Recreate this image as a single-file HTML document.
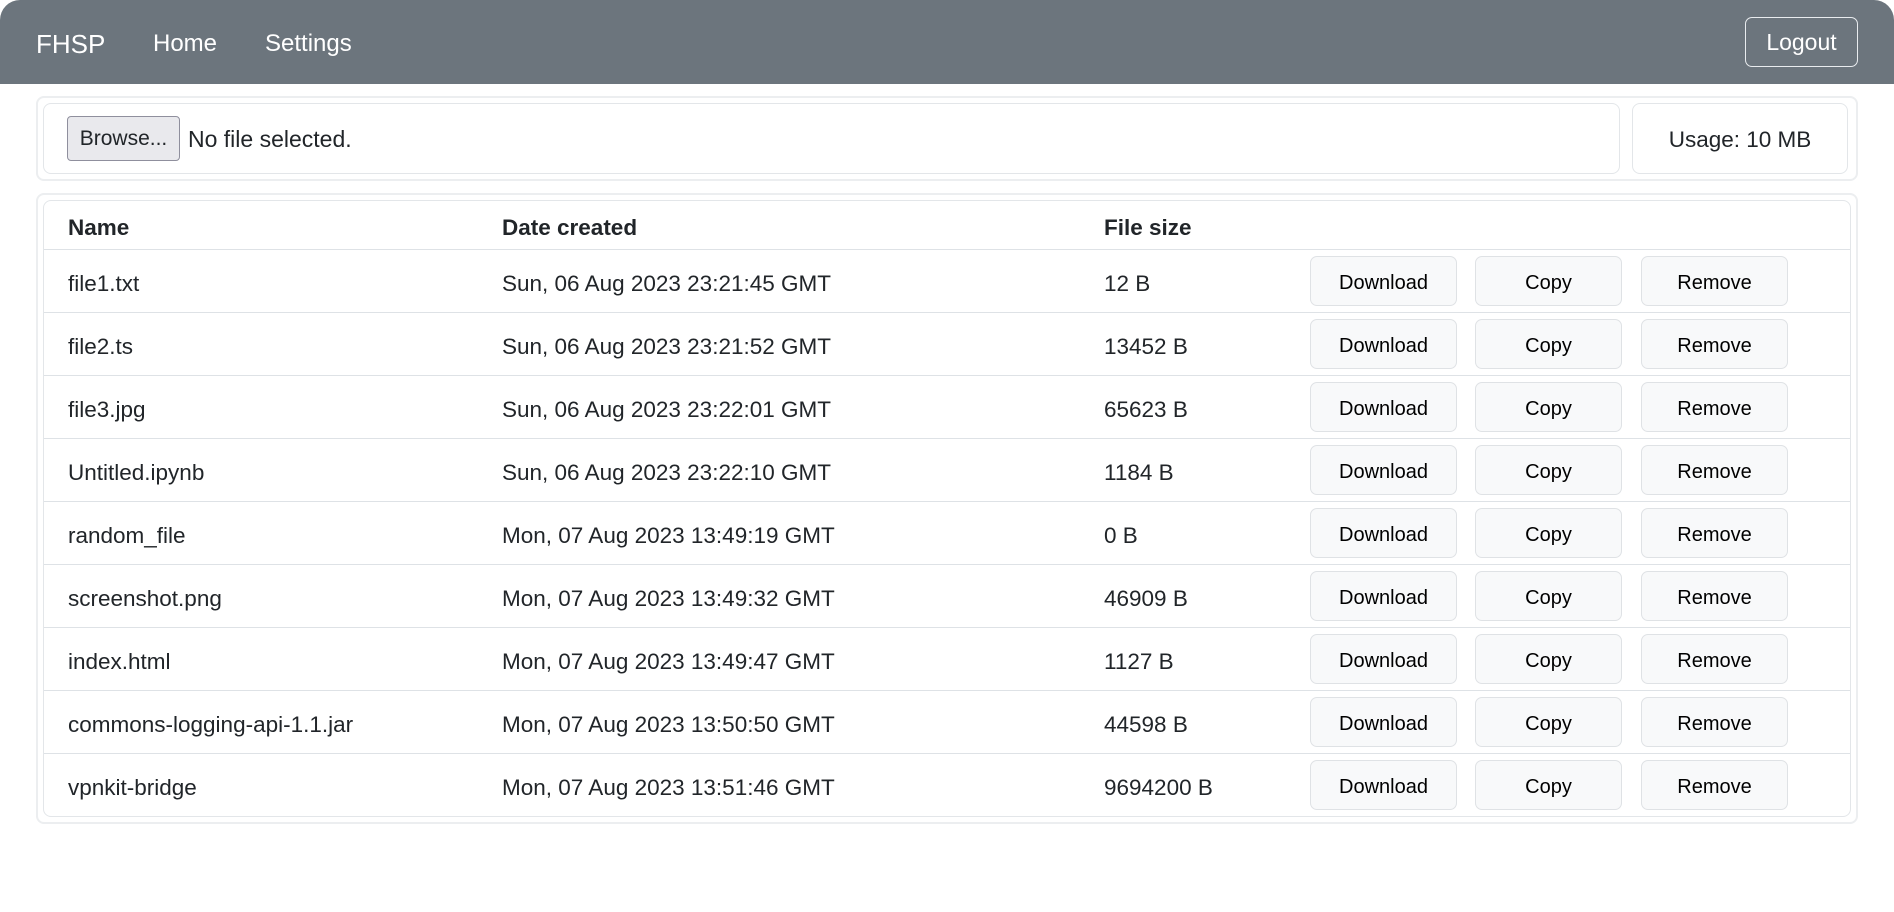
<!DOCTYPE html>
<html><head><meta charset="utf-8"><style>
*{box-sizing:border-box}
body{margin:0;width:1894px;height:912px;background:#fff;font-family:"Liberation Sans",sans-serif;color:#212529;position:relative;overflow:hidden}
.nav{position:absolute;left:0;top:0;width:1894px;height:84px;background:#6c757d;border-radius:20px 20px 0 0}
.nav span{position:absolute;color:#fff;top:30px;font-size:24px}
.brand{left:36px;font-size:26px!important;top:29px!important}
.logout{position:absolute;top:17px;width:113px;height:50px;border:1.5px solid #e9ecef;border-radius:7px;color:#fff;font-size:23px;text-align:center;line-height:48px}
.card{position:absolute;border:2px solid #eceef0;border-radius:8px;background:#fff}
.in{position:absolute;border:1.5px solid #e3e6e9;border-radius:8px}
.browse{position:absolute;background:#e9e9ed;border:1px solid #8f8f9d;border-radius:4px;font-size:21px;line-height:43px;text-align:center}
.row{position:absolute;border-bottom:1.5px solid #dee2e6;font-size:22.5px}
.row div{position:absolute}
.b{position:absolute;top:6px;width:147px;height:50px;background:#f8f9fa;border:1.5px solid #dfe2e5;border-radius:7px;font-size:20px;text-align:center;line-height:52px;color:#000}
</style></head><body>
<div class="nav"><span class="brand">FHSP</span><span style="left:153px">Home</span><span style="left:265px">Settings</span>
<div class="logout" style="left:1745px">Logout</div></div>
<div class="card" style="left:36px;top:96px;width:1822px;height:85px"></div>
<div class="in" style="left:43px;top:103px;width:1577px;height:71px"></div>
<div class="in" style="left:1632px;top:103px;width:216px;height:71px;text-align:center;line-height:71px;font-size:22.5px">Usage: 10 MB</div>
<div class="browse" style="left:67px;width:113px;top:116px;height:45px">Browse...</div>
<div style="position:absolute;left:188px;top:126px;font-size:23px">No file selected.</div>
<div class="card" style="left:36px;top:193px;width:1822px;height:631px"></div>
<div class="in" style="left:43px;top:200px;width:1808px;height:617px"></div>
<div id="t"></div>
<script>
var d=[["file1.txt","Sun, 06 Aug 2023 23:21:45 GMT","12 B"],["file2.ts","Sun, 06 Aug 2023 23:21:52 GMT","13452 B"],["file3.jpg","Sun, 06 Aug 2023 23:22:01 GMT","65623 B"],["Untitled.ipynb","Sun, 06 Aug 2023 23:22:10 GMT","1184 B"],["random_file","Mon, 07 Aug 2023 13:49:19 GMT","0 B"],["screenshot.png","Mon, 07 Aug 2023 13:49:32 GMT","46909 B"],["index.html","Mon, 07 Aug 2023 13:49:47 GMT","1127 B"],["commons-logging-api-1.1.jar","Mon, 07 Aug 2023 13:50:50 GMT","44598 B"],["vpnkit-bridge","Mon, 07 Aug 2023 13:51:46 GMT","9694200 B"]];
var h='<div class="row" style="left:44px;width:1806px;top:201px;height:49px;font-weight:bold"><div style="left:24px;top:14px">Name</div><div style="left:458px;top:14px">Date created</div><div style="left:1060px;top:14px">File size</div></div>';
d.forEach(function(r,i){var y=250+i*63;h+='<div class="row" style="left:44px;width:1806px;top:'+y+'px;height:63px'+(i==8?';border-bottom:none':'')+'"><div style="left:24px;top:21px">'+r[0]+'</div><div style="left:458px;top:21px">'+r[1]+'</div><div style="left:1060px;top:21px">'+r[2]+'</div><div class="b" style="left:1266px">Download</div><div class="b" style="left:1431px">Copy</div><div class="b" style="left:1597px">Remove</div></div>'});
document.getElementById('t').innerHTML=h;
</script>
</body></html>
